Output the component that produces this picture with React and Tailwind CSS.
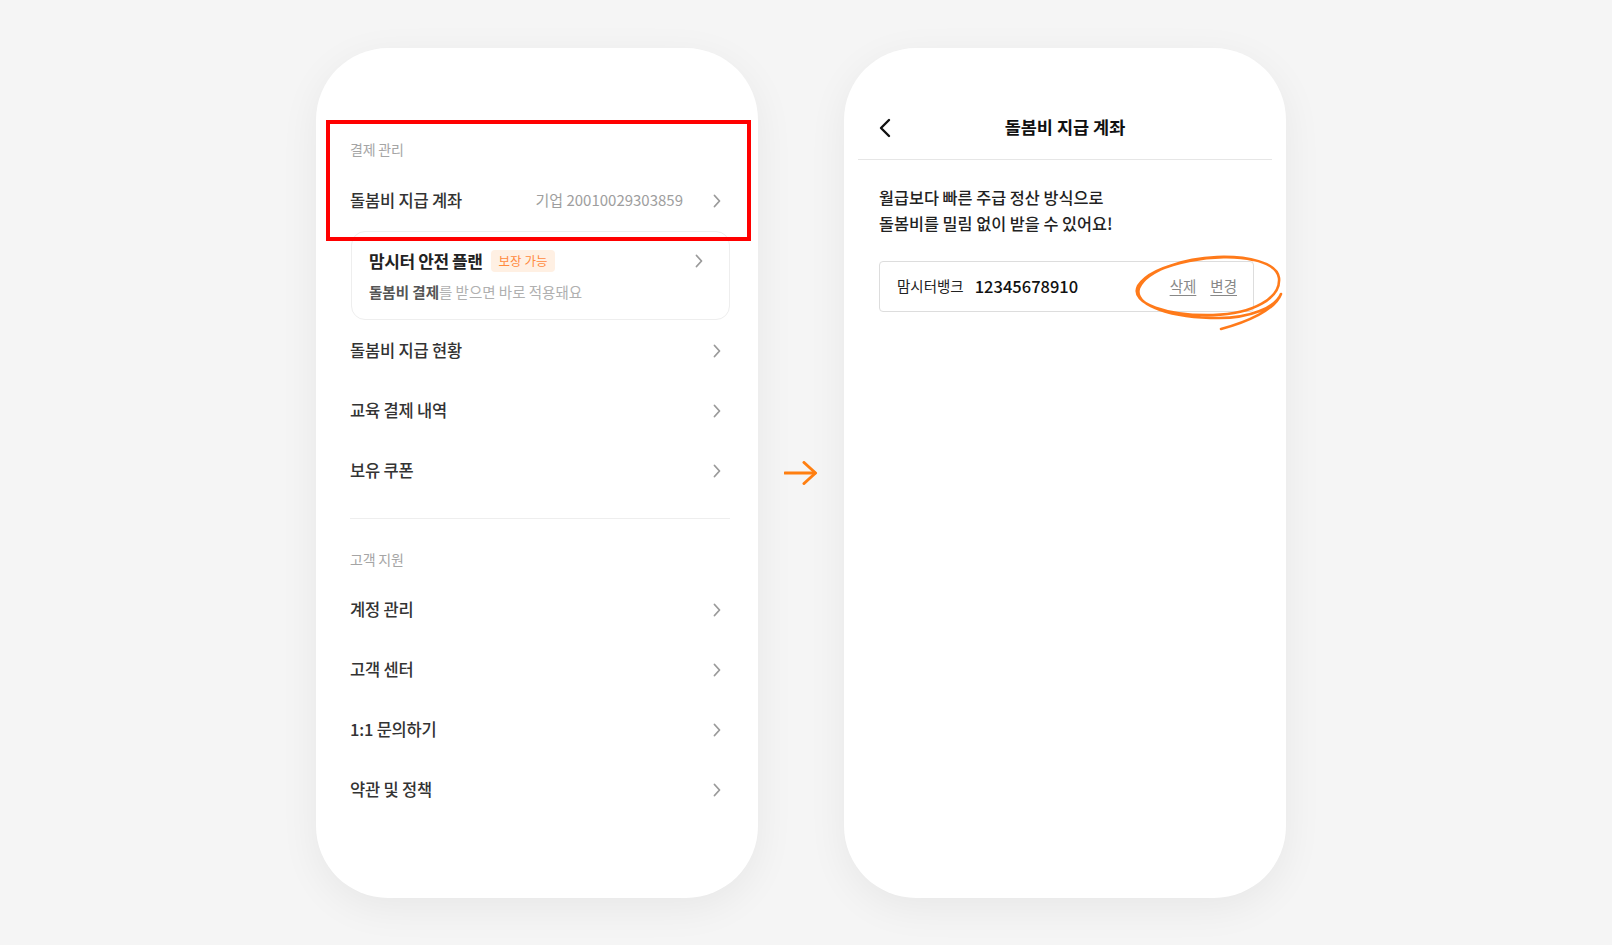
import React from 'react';

const font = { fontFamily: '"Noto Sans CJK KR", "Noto Sans", sans-serif' };

const Chevron = () => (
  <svg width="8" height="14" viewBox="0 0 8 14" fill="none" className="shrink-0">
    <path d="M1.5 1.5L6.5 7L1.5 12.5" stroke="#9a9a9a" strokeWidth="1.8" strokeLinecap="round" strokeLinejoin="round" />
  </svg>
);

const MenuRow = ({ label, value }) => (
  <div className="h-[60px] flex items-center justify-between pr-[9px]">
    <span className="text-[16.5px] tracking-[-0.2px] font-medium text-[#333]">{label}</span>
    <div className="flex items-center gap-[30px]">
      {value && <span className="text-[15px] text-[#9e9e9e]">{value}</span>}
      <Chevron />
    </div>
  </div>
);

const SectionLabel = ({ children }) => (
  <div className="h-[22px] leading-[22px] text-[14px] tracking-[-0.2px] text-[#a5a5a5]">{children}</div>
);

const App = () => {
  return (
    <div className="w-full h-[945px] bg-[#f5f5f5] flex items-center pl-[316px] gap-[26px]" style={font}>
      {/* LEFT PHONE: MY PAGE */}
      <div className="relative w-[442px] h-[850px] bg-white rounded-[72px] shadow-[0_10px_40px_rgba(0,0,0,0.06)] shrink-0">
        <div className="pt-[90px] pl-[34px] pr-[28px]">
          <SectionLabel>결제 관리</SectionLabel>
          <div className="mt-[11px]">
            <MenuRow label="돌봄비 지급 계좌" value="기업 20010029303859" />
          </div>

          <div className="h-[89px] border border-[#eeeeee] rounded-[14px] ml-px pl-[17px] pr-[26px] flex flex-col">
            <div className="mt-[16px] h-[26px] flex items-center justify-between">
              <div className="flex items-center gap-[8px]">
                <span className="text-[17px] font-bold tracking-[-0.4px] text-[#222]">맘시터 안전 플랜</span>
                <span className="h-[22px] px-[8px] rounded-[4px] bg-[#fff0e3] text-[#ff8a3d] text-[12.5px] leading-[22px]">보장 가능</span>
              </div>
              <Chevron />
            </div>
            <div className="mt-[7px] text-[14.5px] text-[#b0b0b0]">
              <span className="font-bold text-[#555]">돌봄비 결제</span>를 받으면 바로 적용돼요
            </div>
          </div>

          <div className="mt-px">
            <MenuRow label="돌봄비 지급 현황" />
            <MenuRow label="교육 결제 내역" />
            <MenuRow label="보유 쿠폰" />
          </div>

          <div className="mt-[17px] h-px bg-[#eeeeee]" />

          <div className="mt-[29px]">
            <SectionLabel>고객 지원</SectionLabel>
          </div>
          <div className="mt-[10px]">
            <MenuRow label="계정 관리" />
            <MenuRow label="고객 센터" />
            <MenuRow label="1:1 문의하기" />
            <MenuRow label="약관 및 정책" />
          </div>
        </div>

        {/* red highlight annotation */}
        <div className="absolute left-[10px] top-[72px] w-[425px] h-[121px] border-[4px] border-[#ff0000] pointer-events-none" />
      </div>

      {/* ARROW */}
      <svg width="34" height="24" viewBox="0 0 34 24" fill="none" className="shrink-0">
        <path d="M1 12H31" stroke="#ff7f11" strokeWidth="3" strokeLinecap="round" />
        <path d="M20 1.5L31.5 12L20 22.5" stroke="#ff7f11" strokeWidth="3" strokeLinecap="round" strokeLinejoin="round" />
      </svg>

      {/* RIGHT PHONE: ACCOUNT DETAIL */}
      <div className="relative w-[442px] h-[850px] bg-white rounded-[72px] shadow-[0_10px_40px_rgba(0,0,0,0.06)] shrink-0">
        <div className="pt-[60px]">
          <div className="h-[40px] px-[35px] grid grid-cols-[1fr_auto_1fr] items-center">
            <svg width="12" height="20" viewBox="0 0 12 20" fill="none">
              <path d="M10 2L2 10L10 18" stroke="#111" strokeWidth="2.4" strokeLinecap="round" strokeLinejoin="round" />
            </svg>
            <span className="text-[17.5px] font-bold text-[#111]">돌봄비 지급 계좌</span>
            <span />
          </div>
          <div className="mt-[11px] mx-[14px] h-px bg-[#e6e6e6]" />

          <div className="mt-[24px] pl-[35px] text-[16.3px] leading-[26px] font-medium text-[#222]">
            <p>월급보다 빠른 주급 정산 방식으로</p>
            <p>돌봄비를 밀림 없이 받을 수 있어요!</p>
          </div>

          <div className="mt-[25px] ml-[35px] w-[375px] h-[51px] border border-[#dddddd] rounded-[4px] flex items-center justify-between pl-[17px] pr-[16px]">
            <div className="flex items-center gap-[11px]">
              <span className="text-[14.5px] text-[#222]">맘시터뱅크</span>
              <span className="text-[16.5px] font-medium text-[#111]">12345678910</span>
            </div>
            <div className="flex items-center gap-[14px] text-[14.5px] text-[#888]">
              <span className="underline underline-offset-[3px]">삭제</span>
              <span className="underline underline-offset-[3px]">변경</span>
            </div>
          </div>
        </div>

        {/* hand-drawn orange circle annotation */}
        <svg className="absolute left-[285px] top-[200px] pointer-events-none" width="160" height="90" viewBox="0 0 160 90" fill="none">
          <path
            d="M124 12 C92 4, 24 14, 9 38 C0 56, 40 68, 84 67 C124 66, 152 50, 150 30 C148 14, 118 8, 88 9 C56 10, 18 22, 10 40 C4 58, 44 70, 90 70 C120 70, 146 60, 152 46 C146 62, 118 74, 92 81"
            stroke="#ff7a1a"
            strokeWidth="2.6"
            strokeLinecap="round"
            strokeLinejoin="round"
          />
        </svg>
      </div>
    </div>
  );
};

export default App;
